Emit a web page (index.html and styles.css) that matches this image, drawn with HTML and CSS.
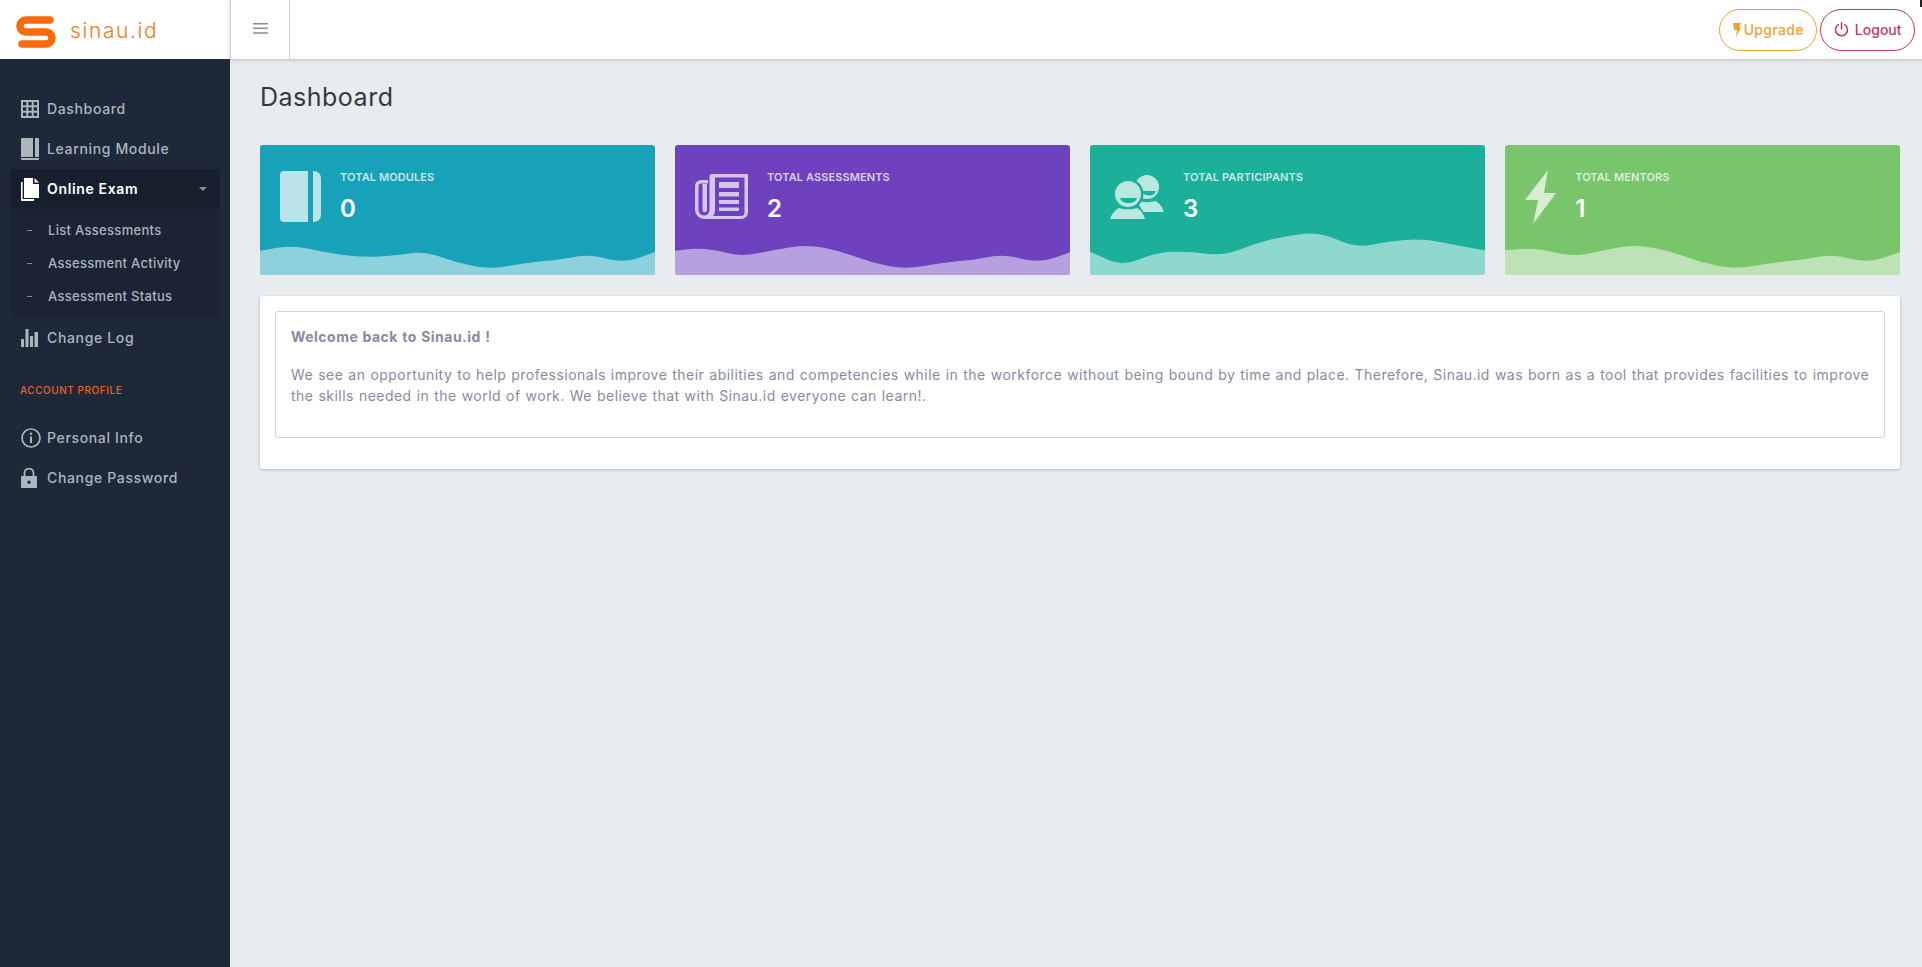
FILE: index.html
```html
<!DOCTYPE html>
<html lang="en">

<head>
    <meta charset="UTF-8">
    <meta name="viewport" content="width=device-width, initial-scale=1.0">
    <title>Sinau.id - Dashboard</title>
    <link rel="stylesheet" href="styles.css">
</head>

<body>
    <i class="corner-mark"></i>
    <div class="page">
        <aside class="sidebar">
            <a class="logo" href="#">
                <svg class="logo-mark" width="42" height="34" viewBox="0 0 42 34">
                    <path d="M35 5H11a6 6 0 0 0 0 12h20a6 6 0 0 1 0 12H7" fill="none" stroke="#f96a0a" stroke-width="7.500" stroke-linecap="round"/>
                </svg>
                <span class="logo-text">sinau.id</span>
            </a>
            <nav class="menu">
                <a class="menu-item" href="#">
                    <svg class="menu-icon" width="18" height="18" viewBox="0 0 18 18"><path d="M0 0h18v18H0zM2 2v3.300h3.300V2zm5.300 0v3.300h3.400V2zm5.400 0v3.300H16V2zM2 7.300v3.400h3.300V7.300zm5.300 0v3.400h3.400V7.300zm5.400 0v3.400H16V7.300zM2 12.700V16h3.300v-3.300zm5.300 0V16h3.400v-3.300zm5.400 0V16H16v-3.300z" fill-rule="evenodd"/></svg>
                    <span>Dashboard</span>
                </a>
                <a class="menu-item" href="#">
                    <svg class="menu-icon" width="18" height="22" viewBox="0 0 18 22"><path d="M1 0h11v19H0V1a1 1 0 0 1 1-1zM14 0h3a1 1 0 0 1 1 1v18h-4zM0 20h18v1a1 1 0 0 1-1 1H1a1 1 0 0 1-1-1z"/></svg>
                    <span>Learning Module</span>
                </a>
                <a class="menu-item active" href="#">
                    <svg class="menu-icon" width="18" height="23" viewBox="0 0 18 23"><path d="M3 0h9v6h6v14H3zM13.500 0 18 4.500h-4.500zM0 4h1.600v17H13v2H1a1 1 0 0 1-1-1z"/></svg>
                    <span>Online Exam</span>
                    <i class="caret"></i>
                </a>
                <div class="submenu">
                    <a class="sub-item" href="#"><i class="dash"></i><span>List Assessments</span></a>
                    <a class="sub-item" href="#"><i class="dash"></i><span>Assessment Activity</span></a>
                    <a class="sub-item" href="#"><i class="dash"></i><span>Assessment Status</span></a>
                </div>
                <a class="menu-item" href="#">
                    <svg class="menu-icon" width="17" height="18" viewBox="0 0 17 18"><path d="M0 10h3v8H0zM4.500 0h3v18h-3zM9 7h3v11H9zM13.500 3H17v15h-3.500z"/></svg>
                    <span>Change Log</span>
                </a>
                <p class="menu-label">ACCOUNT PROFILE</p>
                <a class="menu-item" href="#">
                    <svg class="menu-icon" width="20" height="20" viewBox="0 0 20 20"><circle cx="10" cy="10" r="9" fill="none" stroke="currentColor" stroke-width="1.700"/><path d="M9 8.500h2V15H9z"/><circle cx="10" cy="5.800" r="1.200"/></svg>
                    <span>Personal Info</span>
                </a>
                <a class="menu-item" href="#">
                    <svg class="menu-icon" width="16" height="20" viewBox="0 0 16 20"><path d="M1 8h14a1 1 0 0 1 1 1v10a1 1 0 0 1-1 1H1a1 1 0 0 1-1-1V9a1 1 0 0 1 1-1zm7 4.500a1.700 1.700 0 1 0 0 3.400 1.700 1.700 0 0 0 0-3.400z" fill-rule="evenodd"/><path d="M3.500 8V5a4.500 4.500 0 0 1 9 0v3" fill="none" stroke="currentColor" stroke-width="1.800"/></svg>
                    <span>Change Password</span>
                </a>
            </nav>
        </aside>

        <div class="content">
            <header class="topbar">
                <a class="menu-toggle" href="#">
                    <svg width="15" height="11" viewBox="0 0 15 11"><path d="M0 0h15v1.400H0zM0 4.600h15V6H0zM0 9.300h15v1.400H0z" fill="#868e96"/></svg>
                </a>
                <div class="topbar-actions">
                    <a class="pill pill-upgrade" href="#">
                        <svg width="8" height="14" viewBox="0 0 8 14"><path d="M0 0h8L6.600 4.500H8L3 14l1-7H1.200z" fill="currentColor"/></svg>
                        Upgrade
                    </a>
                    <a class="pill pill-logout" href="#">
                        <svg width="15" height="15" viewBox="0 0 15 15"><path d="M4.300 2.700a6 6 0 1 0 6.400 0M7.500 .8v6.200" fill="none" stroke="currentColor" stroke-width="1.500" stroke-linecap="round"/></svg>
                        Logout
                    </a>
                </div>
            </header>

            <main class="main">
                <h1 class="page-title">Dashboard</h1>

                <section class="stats">
                    <div class="stat stat-teal">
                        <div class="stat-body">
                            <svg class="stat-icon" width="41" height="51" viewBox="0 0 41 51"><path d="M4 0h24v51H4a4 4 0 0 1-4-4V4a4 4 0 0 1 4-4zM33 0h1a7 7 0 0 1 7 7v37a7 7 0 0 1-7 7h-1z"/></svg>
                            <div>
                                <div class="stat-label">TOTAL MODULES</div>
                                <div class="stat-value">0</div>
                            </div>
                        </div>
                        <svg class="wave" viewBox="0 0 1178 390" preserveAspectRatio="none"><path d="M0 317L47 309Q95 301 145 311Q195 322 242 329Q290 336 340 335Q390 334 440 326Q490 318 540 336Q590 355 640 364Q690 373 740 363Q790 354 840 349Q890 345 937 336Q985 327 1035 341Q1085 355 1131 338L1178 321V390H0z"/></svg>
                    </div>
                    <div class="stat stat-purple">
                        <div class="stat-body">
                            <svg class="stat-icon" width="53" height="45" viewBox="0 0 53 45"><path d="M19 0h34v38a7 7 0 0 1-7 7H9a9 9 0 0 1-9-9V12a6 6 0 0 1 6-6h7v3.500H6A2.500 2.500 0 0 0 3.500 12v24a5.500 5.500 0 0 0 11 0V3a3 3 0 0 1 4.500-3zM20 3.500V36c0 2.500-.7 4.500-2 6h28a3.500 3.500 0 0 0 3.500-3.500V3.500zM7.500 10H12v26a2.250 2.250 0 0 1-4.500 0zM24 8h20v6H24zM24 18h20v4.500H24zM24 26h20v4H24zM24 33.500h20V37H24z" fill-rule="evenodd"/></svg>
                            <div>
                                <div class="stat-label">TOTAL ASSESSMENTS</div>
                                <div class="stat-value">2</div>
                            </div>
                        </div>
                        <svg class="wave" viewBox="0 0 1178 390" preserveAspectRatio="none"><path d="M0 317L48 312Q96 308 146 322Q196 336 246 325Q296 315 346 307Q396 299 443 308Q491 317 541 336Q591 355 641 364Q691 373 741 363Q791 354 841 349Q891 345 936 336Q981 327 1033 341Q1086 355 1132 338L1178 322V390H0z"/></svg>
                    </div>
                    <div class="stat stat-green">
                        <div class="stat-body">
                            <svg class="stat-icon" width="54" height="45" viewBox="0 0 54 45">
                                <mask id="frontPerson">
                                    <rect width="54" height="45" fill="#fff"/>
                                    <circle cx="18" cy="20" r="15.500" fill="#000"/>
                                    <path d="M7 31h22l9 14H0z" fill="#000"/>
                                </mask>
                                <g mask="url(#frontPerson)">
                                    <path d="M37 1a12 12 0 1 1 0 24 12 12 0 0 1 0-24zM32 17h14c-1 3-3.500 4.500-7 4.500S33 20 32 17z" fill-rule="evenodd"/>
                                    <path d="M29 27c2 .7 5 1.200 8 1.200s6-.5 8-1.200c4 1.500 7 5.500 9 11H29z"/>
                                </g>
                                <path d="M18 7a13 13 0 1 1 0 26 13 13 0 0 1 0-26zM10 24h17c-1 3-4 5-8.500 5S11 27 10 24z" fill-rule="evenodd"/>
                                <path d="M9 34c2 .8 5 1.300 9 1.300s7-.5 9-1.300c4 2 6.500 6 8 11H0c1.500-5 5-9 9-11z"/>
                            </svg>
                            <div>
                                <div class="stat-label">TOTAL PARTICIPANTS</div>
                                <div class="stat-value">3</div>
                            </div>
                        </div>
                        <svg class="wave" viewBox="0 0 1178 390" preserveAspectRatio="none"><path d="M0 320L49 342Q98 365 148 343Q198 321 249 320Q300 319 347 326Q395 333 445 314Q495 295 542 283Q590 271 640 266Q690 261 740 285Q790 309 840 299Q890 289 940 285Q990 281 1040 290Q1090 300 1134 308L1178 316V390H0z"/></svg>
                    </div>
                    <div class="stat stat-lime">
                        <div class="stat-body">
                            <svg class="stat-icon" width="31" height="54" viewBox="0 0 31 54"><path d="M23 0 19 23h12L8 54l5-24H0z"/></svg>
                            <div>
                                <div class="stat-label">TOTAL MENTORS</div>
                                <div class="stat-value">1</div>
                            </div>
                        </div>
                        <svg class="wave" viewBox="0 0 1178 390" preserveAspectRatio="none"><path d="M0 316L48 312Q96 308 146 322Q196 336 246 326Q296 316 343 307Q391 299 441 308Q491 317 541 336Q591 355 641 364Q691 373 741 363Q791 354 838 349Q886 345 933 336Q981 327 1031 341Q1081 355 1129 338L1178 322V390H0z"/></svg>
                    </div>
                </section>

                <section class="panel">
                    <div class="panel-box">
                        <h2 class="panel-title">Welcome back to Sinau.id !</h2>
                        <p class="panel-text">We see an opportunity to help professionals improve their abilities and competencies while in the workforce without being bound by time and place. Therefore, Sinau.id was born as a tool that provides facilities to improve<br>the skills needed in the world of work. We believe that with Sinau.id everyone can learn!.</p>
                    </div>
                </section>
            </main>
        </div>
    </div>
</body>

</html>
```

FILE: styles.css
```css
* {
    box-sizing: border-box;
}

body {
    position: relative;
    margin: 0;
    background-color: #fff;
    font-family: "Inter", "Liberation Sans", sans-serif;
    font-size: 14px;
    overflow: hidden;
}

a {
    text-decoration: none;
}

.page {
    display: flex;
    width: 1920px;
    height: 967px;
}

.corner-mark {
    position: absolute;
    top: 0;
    right: 0;
    width: 2px;
    height: 7px;
    background-color: #222;
}

/* sidebar */
.sidebar {
    flex: 0 0 230px;
    background-color: #1d2939;
}

.logo {
    display: flex;
    align-items: center;
    gap: 13px;
    height: 59px;
    padding: 4px 0 0 15px;
    background-color: #fff;
}

.logo-text {
    color: #f5791f;
    font-size: 21px;
    font-weight: 300;
    letter-spacing: 1.600px;
    padding-bottom: 3px;
}

.menu {
    display: flex;
    flex-direction: column;
    padding-top: 30px;
}

.menu-item {
    display: grid;
    grid-template-columns: 26px 1fr auto;
    align-items: center;
    height: 40px;
    margin: 0 10px;
    padding-left: 11px;
    color: #adb5bd;
    font-size: 14px;
    font-weight: 500;
    letter-spacing: .65px;
}

.menu-item span,
.sub-item span {
    padding-bottom: 2px;
}

.menu-icon {
    fill: currentColor;
}

.menu-item.active {
    background-color: #171f2d;
    color: #fff;
    font-weight: 600;
}

.caret {
    margin-right: 13px;
    border-top: 4px solid #868e96;
    border-left: 4px solid transparent;
    border-right: 4px solid transparent;
}

.submenu {
    display: flex;
    flex-direction: column;
    height: 109px;
    margin: 0 10px;
    padding: 5px 0;
    background-color: #1a2434;
}

.sub-item {
    display: flex;
    align-items: center;
    height: 33px;
    padding-left: 17px;
    color: #adb5bd;
    font-size: 13px;
    font-weight: 500;
    letter-spacing: .3px;
}

.dash {
    width: 5px;
    height: 1px;
    margin-right: 16px;
    background-color: #868e96;
}

.menu-label {
    height: 60px;
    margin: 0;
    padding: 25px 0 0 20px;
    color: #e8602c;
    font-size: 10px;
    font-weight: 500;
    line-height: 14px;
    letter-spacing: .55px;
}

/* topbar */
.content {
    flex: 1;
    display: flex;
    flex-direction: column;
    background-color: #e9ecef;
}

.topbar {
    display: flex;
    align-items: center;
    justify-content: space-between;
    flex: 0 0 59px;
    padding-right: 15px;
    background-color: #fff;
    box-shadow: 0 1px 4px rgba(0, 0, 0, .2);
}

.menu-toggle {
    display: flex;
    align-items: center;
    justify-content: center;
    width: 60px;
    height: 59px;
    padding-bottom: 3px;
    border-left: 1px solid #ced4da;
    border-right: 1px solid #ced4da;
}

.topbar-actions {
    display: flex;
    gap: 3px;
}

.pill {
    display: flex;
    align-items: center;
    justify-content: center;
    gap: 3px;
    height: 42px;
    border: 1px solid;
    border-radius: 21px;
    font-size: 14px;
    font-weight: 500;
    letter-spacing: .3px;
}

.pill-upgrade {
    width: 98px;
    color: #f0a135;
}

.pill-logout {
    width: 95px;
    gap: 6px;
    color: #c2395c;
    letter-spacing: 0;
}

/* main */
.main {
    padding: 21px 30px;
}

.page-title {
    margin: 0 0 31px;
    color: #343a40;
    font-size: 25px;
    font-weight: 400;
    line-height: 34px;
    letter-spacing: .5px;
}

.stats {
    display: grid;
    grid-template-columns: repeat(4, 1fr);
    gap: 20px;
}

.stat {
    position: relative;
    height: 130px;
    border-radius: 3px;
    overflow: hidden;
    color: #fff;
}

.stat-teal {
    background-color: #18a2b9;
}

.stat-purple {
    background-color: #6e41bf;
}

.stat-green {
    background-color: #1cb09a;
}

.stat-lime {
    background-color: #78c56c;
}

.stat-body {
    display: flex;
    align-items: center;
    gap: 19px;
    padding: 24px 20px 0;
}

.stat-icon {
    flex: none;
    fill: rgba(255, 255, 255, .7);
}

.stat-label {
    color: rgba(255, 255, 255, .75);
    font-size: 11px;
    font-weight: 600;
    line-height: 16px;
    letter-spacing: .1px;
}

.stat-value {
    margin-top: 9px;
    font-size: 24px;
    font-weight: 600;
    line-height: 30px;
}

.wave {
    position: absolute;
    left: 0;
    bottom: 0;
    width: 100%;
    height: 100%;
    fill: rgba(255, 255, 255, .5);
}

.panel {
    margin-top: 21px;
    padding: 15px 15px 31px;
    background-color: #fff;
    border-radius: 3px;
    box-shadow: 0 1px 3px rgba(0, 0, 0, .25);
}

.panel-box {
    padding: 14px 15px 15px;
    border: 1px solid #ced4da;
    border-radius: 3px;
    color: #868ba1;
    letter-spacing: .47px;
    word-spacing: .6px;
}

.panel-title {
    margin: 0 0 17px;
    font-size: 14px;
    font-weight: 700;
    line-height: 21px;
}

.panel-text {
    margin: 0 0 16px;
    font-size: 14px;
    line-height: 21px;
    white-space: nowrap;
}
```
